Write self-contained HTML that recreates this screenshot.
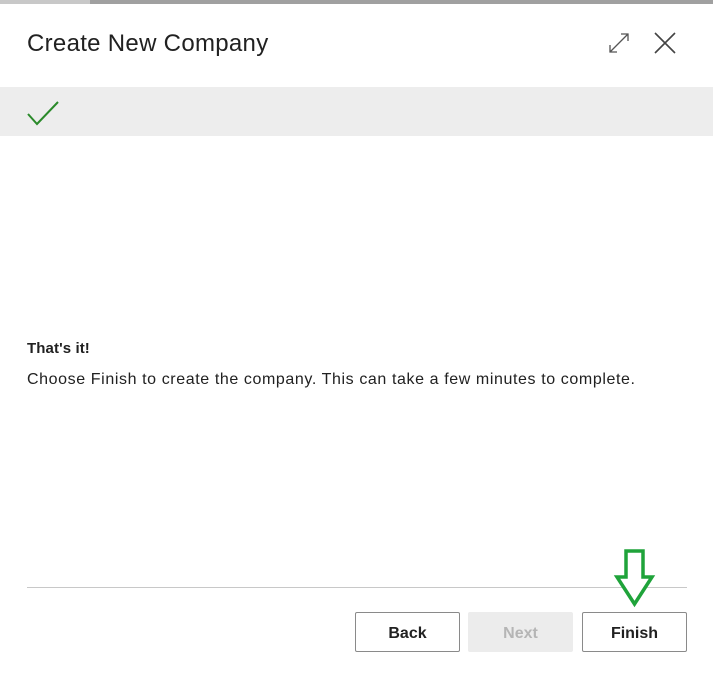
<!DOCTYPE html>
<html><head><style>
body{margin:0;width:713px;height:677px;background:#fff;font-family:"Liberation Sans",sans-serif;position:relative;overflow:hidden;color:#212121}
.top{position:absolute;left:0;top:0;width:713px;height:4px;background:#a0a0a0}
.top i{position:absolute;left:0;top:0;width:90px;height:4px;background:#c8c8c8}
h1{position:absolute;left:27px;top:30px;margin:0;font-size:24px;font-weight:normal;letter-spacing:0.3px;color:#212121}
.band{position:absolute;left:0;top:87px;width:713px;height:49px;background:#ededed}
.t1{position:absolute;left:27px;top:340px;font-size:15px;font-weight:bold;letter-spacing:0.1px}
.t2{position:absolute;left:27px;top:371px;font-size:16px;letter-spacing:0.6px}
.sep{position:absolute;left:27px;top:587px;width:660px;height:1px;background:#c8c8c8}
.btn{position:absolute;top:612px;border:1px solid #8a8a8a;border-radius:2px;box-sizing:border-box;font-size:16px;font-weight:bold;text-align:center;line-height:42px;height:40px;width:105px}
</style></head><body>
<div class="top"><i></i></div>
<h1>Create New Company</h1>
<svg style="position:absolute;left:606px;top:30px" width="80" height="26">
<path d="M4 22 L22 4 M15 4 H22 V11 M4 15 V22 H11" stroke="#555" stroke-width="1.3" fill="none"/>
<path d="M49 3 L69 23 M69 3 L49 23" stroke="#444" stroke-width="1.6" fill="none"/>
</svg>
<div class="band"></div>
<svg style="position:absolute;left:26px;top:100px" width="36" height="28"><path d="M2 14 L11 24 L32 2" stroke="#2a8a2a" stroke-width="2" fill="none"/></svg>
<div class="t1">That's it!</div>
<div class="t2">Choose Finish to create the company. This can take a few minutes to complete.</div>
<div class="sep"></div>
<div class="btn" style="left:355px">Back</div>
<div class="btn" style="left:468px;border-color:#ececec;background:#ececec;color:#b5b5b5">Next</div>
<div class="btn" style="left:582px">Finish</div>
<svg style="position:absolute;left:612px;top:546px" width="46" height="64"><path d="M14 5 H31 V31 H40 L22.5 58 L5 31 H14 Z" stroke="#1fa33a" stroke-width="3.5" fill="#fff" stroke-linejoin="miter"/></svg>
</body></html>
